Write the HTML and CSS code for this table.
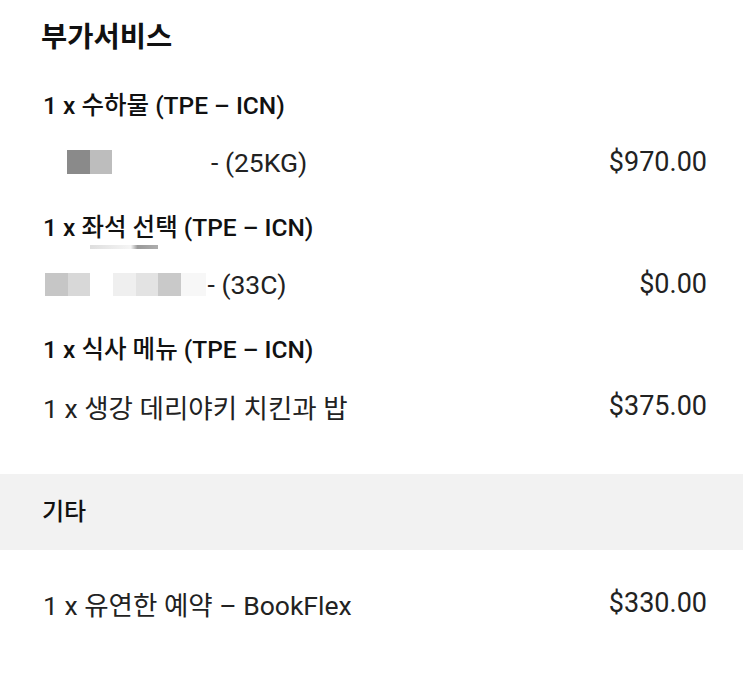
FILE: index.html
```html
<!DOCTYPE html>
<html lang="ko">
<head>
<meta charset="utf-8">
<link rel="stylesheet" href="styles.css">
</head>
<body>
<main class="page">
  <section class="addons">
    <h2 class="title">부가서비스</h2>
    <div class="item">
      <div class="head">1 x 수하물 (TPE – ICN)</div>
      <div class="row">
        <div class="desc">
          <span class="blur b1"><i class="c8a"></i><i class="cbd"></i></span>
          <span class="detail d1">- (25KG)</span>
        </div>
        <div class="price">$970.00</div>
      </div>
    </div>
    <div class="item">
      <div class="head">1 x 좌석 선택 (TPE – ICN)<span class="smear"></span></div>
      <div class="row">
        <div class="desc">
          <span class="blur b2"><i class="cc4"></i><i class="cd6"></i></span>
          <span class="blur b3"><i class="cee"></i><i class="ce2"></i><i class="cc8"></i><i class="cf6"></i></span>
          <span class="detail d2">- (33C)</span>
        </div>
        <div class="price">$0.00</div>
      </div>
    </div>
    <div class="item">
      <div class="head">1 x 식사 메뉴 (TPE – ICN)</div>
      <div class="row">
        <div class="desc">1 x 생강 데리야키 치킨과 밥</div>
        <div class="price">$375.00</div>
      </div>
    </div>
  </section>
  <div class="band">기타</div>
  <section class="other">
    <div class="row">
      <div class="desc">1 x 유연한 예약 – BookFlex</div>
      <div class="price">$330.00</div>
    </div>
  </section>
</main>
</body>
</html>
```
FILE: styles.css
```css
* { box-sizing: border-box; }
html, body { margin: 0; padding: 0; background: #fff; }
body {
  font-family: Roboto, "Noto Sans CJK KR", sans-serif;
  color: #1a1a1a;
  width: 743px;
}
.page { display: flex; flex-direction: column; }
.addons {
  display: flex;
  flex-direction: column;
  gap: 26px;
  padding: 18px 36px 0 41px;
}
.title {
  margin: 0 0 2px;
  height: 40px;
  line-height: 40px;
  font-size: 28.5px;
  font-weight: 700;
  color: #111;
}
.item { display: flex; flex-direction: column; gap: 16px; }
.head {
  position: relative;
  height: 40px;
  line-height: 40px;
  font-size: 24.5px;
  font-weight: 500;
  color: #111;
  padding-left: 2px;
}
.smear {
  position: absolute;
  left: 49px;
  top: 37px;
  width: 68px;
  height: 4px;
  background: linear-gradient(90deg, #c8c8c8, #efefef 60%, #555 70%, #777);
  opacity: 0.6;
}
.row {
  display: flex;
  justify-content: space-between;
  align-items: center;
  height: 40px;
  font-size: 26.5px;
  color: #222;
  padding-left: 2px;
}
.desc { display: flex; align-items: center; white-space: nowrap; }
.blur { display: flex; height: 24px; }
.blur i { display: block; width: 22.5px; height: 24px; }
.b1 { margin-left: 24px; }
.b2 { margin-left: 2px; height: 23px; }
.b3 { margin-left: 23px; height: 23px; }
.b2 i, .b3 i { height: 23px; }
.c8a { background: #8a8a8a; }
.cbd { background: #bdbdbd; }
.cc4 { background: #c6c6c6; }
.cd6 { background: #d8d8d8; }
.cee { background: #efefef; }
.ce2 { background: #e3e3e3; }
.cc8 { background: #c9c9c9; }
.b3 .cf6 { background: #f7f7f7; width: 25px; }
.detail { color: #222; }
.d1 { margin-left: 99px; }
.d2 { margin-left: 2px; }
.price { font-size: 27px; color: #222; }
.band {
  margin-top: 48px;
  height: 76px;
  line-height: 76px;
  background: #f2f2f2;
  padding-left: 42px;
  font-size: 24px;
  font-weight: 500;
  color: #111;
}
.other { padding: 33px 36px 0 41px; }
```
